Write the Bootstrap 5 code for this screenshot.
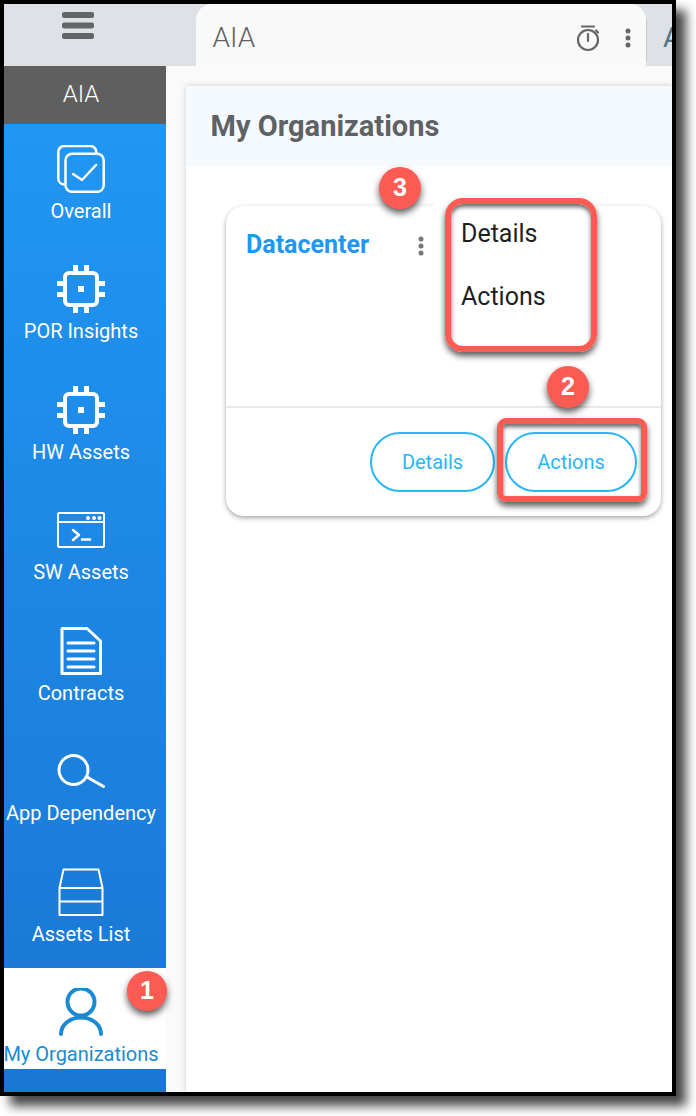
<!DOCTYPE html>
<html lang="en">
<head>
    <meta charset="UTF-8">
    <meta name="viewport" content="width=device-width, initial-scale=1.0">
    <title>My Organizations</title>
    <link href="https://cdn.jsdelivr.net/npm/bootstrap@5.3.0/dist/css/bootstrap.min.css" rel="stylesheet">
    <style>
        body {
            background-color: #fff;
            font-family: Roboto, "Liberation Sans", sans-serif;
            min-height: 1116px;
        }

        .shot-frame {
            width: 676px;
            height: 1096px;
            border: 4px solid #000;
            box-shadow: 10px 10px 10px rgba(0, 0, 0, 0.72);
            overflow: hidden;
            background-color: #fff;
        }

        /* top strip */
        .top-strip {
            height: 62px;
            background-color: #dee2e6;
        }

        .burger-cell {
            width: 192px;
            padding: 8px 0 0 58px;
        }

        .tab-active {
            width: 450px;
            background-color: #f9f9f9;
            border-radius: 16px 16px 0 0;
            padding: 6px 15px 0 16.500px;
            height: 62px;
            color: #5f6265;
            font-size: 28px;
            font-weight: 300;
        }

        .tab-next {
            width: 26px;
            overflow: hidden;
            color: #4f7286;
            font-size: 28px;
            line-height: 34px;
            padding: 17px 0 0 17px;
            position: relative;
        }

        .tab-next::before {
            content: "";
            position: absolute;
            left: 0;
            top: 16px;
            bottom: 4px;
            width: 1px;
            background-color: #c5cacd;
        }

        .tab-tools {
            gap: 25px;
        }

        /* sidebar */
        .side-col {
            width: 162px;
            flex: none;
            height: 1026px;
        }

        .side-brand {
            height: 58px;
            background-color: #5f5f5f;
            color: #fff;
            font-size: 24px;
            font-weight: 300;
            padding: 0 8px 2px 0;
        }

        .side-menu {
            height: 968px;
            background: linear-gradient(180deg, #2196f3, #1976d2);
            padding-top: 0.5px;
        }

        .side-item {
            height: 100.5px;
            margin-bottom: 20px;
            padding: 20px 8px 0 0;
            color: #fff;
            font-size: 20px;
            line-height: 27px;
            white-space: nowrap;
        }

        .side-item svg {
            display: block;
            margin-bottom: 5px;
        }

        .side-item.is-on {
            background-color: #fff;
            color: #1a8ad4;
            margin-bottom: 0;
        }

        /* main area */
        .main-col {
            background-color: #fafafa;
            padding: 20px 0 0 20px;
            min-width: 0;
        }

        .org-panel {
            background-color: #fff;
            height: 1006px;
            box-shadow: 0 0 6px rgba(0, 0, 0, 0.18);
        }

        .org-head {
            height: 80px;
            background-color: #f5faff;
            color: #5f6265;
            font-size: 29px;
            font-weight: 700;
            padding: 2px 0 0 24.500px;
        }

        .org-body {
            padding: 40px 11px 0 40px;
        }

        .org-card {
            height: 310px;
            border: 0;
            border-radius: 18px;
            box-shadow: 0 2px 5px rgba(0, 0, 0, 0.35);
        }

        .org-card .card-body {
            padding: 24px 20px 0;
            height: 200px;
            flex: none;
        }

        .org-name {
            color: #2196f3;
            font-size: 25px;
            font-weight: 700;
            line-height: 30px;
        }

        .card-kebab {
            margin: 6px 0 0 49px;
        }

        .org-card .card-footer {
            background-color: transparent;
            border-top: 2px solid #e9e9e9;
            padding: 24px 24px 0 0;
            gap: 10px;
        }

        .btn-pill {
            height: 60px;
            border: 2px solid #29b6f6;
            border-radius: 30px;
            color: #29b6f6;
            background-color: #fff;
            font-size: 20px;
            line-height: 54px;
            padding: 0;
        }

        .btn-details { width: 125px; }
        .btn-actions { width: 132px; }

        /* annotations */
        .org-menu {
            position: absolute;
            left: 208px;
            top: -3px;
            width: 164px;
            height: 150px;
            background-color: #fff;
        }

        .call-box {
            position: absolute;
            border: 6px solid #fc5b53;
            box-shadow: 0 4px 6px rgba(0, 0, 0, 0.65), inset 0 3px 4px rgba(0, 0, 0, 0.6);
        }

        .call-menu {
            left: 219px;
            top: -8px;
            width: 152px;
            height: 154px;
            border-radius: 18px;
            padding: 12px 10px;
            color: #1f1f1f;
            font-size: 25px;
            line-height: 36px;
        }

        .call-menu div + div {
            margin-top: 27px;
        }

        .call-btn {
            left: 271px;
            top: 212px;
            width: 150px;
            height: 84px;
            border-radius: 9px;
        }

        .call-dot {
            position: absolute;
            width: 42px;
            height: 42px;
            background-color: #fc5b53;
            color: #fff;
            font-family: "Liberation Sans", sans-serif;
            font-size: 25px;
            font-weight: 700;
            box-shadow: 0 4px 7px rgba(0, 0, 0, 0.65);
        }

        .dot-one { left: 123px; top: 967px; width: 40px; height: 40px; }
        .dot-two { left: 321px; top: 160px; }
        .dot-three { left: 153px; top: -39px; }
    </style>
</head>
<body>
    <div class="shot-frame position-relative">
        <div class="top-strip d-flex">
            <div class="burger-cell">
                <svg width="32" height="27" viewBox="0 0 32 27"><g fill="#636668"><rect width="32" height="6" rx="2"/><rect y="10.500" width="32" height="6" rx="2"/><rect y="21" width="32" height="6" rx="2"/></g></svg>
            </div>
            <div class="tab-active d-flex align-items-center justify-content-between">
                <span>AIA</span>
                <span class="tab-tools d-flex align-items-center">
                    <svg width="24" height="28" viewBox="0 0 24 28" fill="none" stroke="#666" stroke-width="2.200"><circle cx="12" cy="16" r="10"/><path d="M6 2.500h12M12 10v7M20 6.500l2 2" stroke-linecap="round"/></svg>
                    <svg width="6" height="20" viewBox="0 0 6 20" fill="#666"><circle cx="3" cy="3" r="2.500"/><circle cx="3" cy="10" r="2.500"/><circle cx="3" cy="17" r="2.500"/></svg>
                </span>
            </div>
            <div class="tab-next">A</div>
        </div>

        <div class="d-flex">
            <div class="side-col">
                <div class="side-brand d-flex align-items-center justify-content-center">AIA</div>
                <div class="side-menu">
                    <div class="side-item d-flex flex-column align-items-center">
                        <svg width="48" height="48" viewBox="0 0 48 48" fill="none" stroke="#fff" stroke-width="2.500" stroke-linecap="round" stroke-linejoin="round"><path d="M7.500 39.500H7a6 6 0 0 1-5.700-6V7a6 6 0 0 1 6-6h26a6 6 0 0 1 6 6v1"/><rect x="8.500" y="8.800" width="38.200" height="38" rx="6.500"/><path d="M16 29l9 6 14-15"/></svg>
                        <span>Overall</span>
                    </div>
                    <div class="side-item d-flex flex-column align-items-center">
                        <svg width="48" height="48" viewBox="0 0 48 48"><rect x="8" y="8" width="32" height="32" rx="4" fill="none" stroke="#fff" stroke-width="4"/><rect x="21" y="21" width="6" height="6" fill="#fff"/><path d="M16 0h5v6h-5zM27 0h5v6h-5zM16 42h5v6h-5zM27 42h5v6h-5zM0 16h6v5H0zM0 27h6v5H0zM42 16h6v5h-6zM42 27h6v5h-6z" fill="#fff"/></svg>
                        <span>POR Insights</span>
                    </div>
                    <div class="side-item d-flex flex-column align-items-center">
                        <svg width="48" height="48" viewBox="0 0 48 48"><rect x="8" y="8" width="32" height="32" rx="4" fill="none" stroke="#fff" stroke-width="4"/><rect x="21" y="21" width="6" height="6" fill="#fff"/><path d="M16 0h5v6h-5zM27 0h5v6h-5zM16 42h5v6h-5zM27 42h5v6h-5zM0 16h6v5H0zM0 27h6v5H0zM42 16h6v5h-6zM42 27h6v5h-6z" fill="#fff"/></svg>
                        <span>HW Assets</span>
                    </div>
                    <div class="side-item d-flex flex-column align-items-center">
                        <svg width="48" height="48" viewBox="0 0 48 48" fill="none" stroke="#fff" stroke-width="2"><rect x="1" y="7" width="46" height="34" rx="1"/><path d="M1 16h46"/><path d="M16 24l6 5-6 5" stroke-width="2.500" stroke-linecap="round" stroke-linejoin="round"/><path d="M25 33.500h8" stroke-width="2.500" stroke-linecap="round"/><g fill="#fff" stroke="none"><circle cx="31" cy="12" r="2"/><circle cx="37" cy="12" r="2"/><circle cx="42.500" cy="12" r="2"/></g></svg>
                        <span>SW Assets</span>
                    </div>
                    <div class="side-item d-flex flex-column align-items-center">
                        <svg width="48" height="48" viewBox="0 0 48 48" fill="none" stroke="#fff" stroke-width="3" stroke-linecap="round" stroke-linejoin="round"><path d="M5 1.500h25L43.500 14v32.500H5z"/><path d="M11 16h26M11 24h26M11 32h26M11 40h26"/></svg>
                        <span>Contracts</span>
                    </div>
                    <div class="side-item d-flex flex-column align-items-center">
                        <svg width="48" height="48" viewBox="0 0 48 48" fill="none" stroke="#fff" stroke-width="3" stroke-linecap="round"><circle cx="16.500" cy="23" r="14.500"/><path d="M30 30l16.500 9.500"/></svg>
                        <span>App Dependency</span>
                    </div>
                    <div class="side-item d-flex flex-column align-items-center">
                        <svg width="48" height="48" viewBox="0 0 48 48" fill="none" stroke="#fff" stroke-width="2" stroke-linejoin="round"><path d="M6.500 1.500h35L45.500 20h-43zM2.500 20h43v27h-43zM2.500 33.500h43"/></svg>
                        <span>Assets List</span>
                    </div>
                    <div class="side-item is-on d-flex flex-column align-items-center">
                        <svg width="48" height="48" viewBox="0 0 48 48" fill="none" stroke="#1a8ad4" stroke-width="4" stroke-linecap="round"><circle cx="24" cy="14" r="13.500"/><path d="M4 46c0-9.500 9-16.500 20-16.500S44 36.500 44 46"/></svg>
                        <span>My Organizations</span>
                    </div>
                </div>
            </div>

            <div class="main-col flex-grow-1">
                <div class="org-panel">
                    <div class="org-head d-flex align-items-center">My Organizations</div>
                    <div class="org-body">
                        <div class="card org-card position-relative">
                            <div class="card-body d-flex align-items-start">
                                <span class="org-name">Datacenter</span>
                                <svg class="card-kebab" width="6" height="20" viewBox="0 0 6 20" fill="#777"><circle cx="3" cy="3" r="2.500"/><circle cx="3" cy="10" r="2.500"/><circle cx="3" cy="17" r="2.500"/></svg>
                            </div>
                            <div class="card-footer d-flex justify-content-end">
                                <button type="button" class="btn btn-pill btn-details">Details</button>
                                <button type="button" class="btn btn-pill btn-actions">Actions</button>
                            </div>

                            <div class="org-menu"></div>
                            <div class="call-box call-menu">
                                <div>Details</div>
                                <div>Actions</div>
                            </div>
                            <div class="call-box call-btn"></div>
                            <div class="call-dot dot-two rounded-circle d-flex align-items-center justify-content-center">2</div>
                            <div class="call-dot dot-three rounded-circle d-flex align-items-center justify-content-center">3</div>
                        </div>
                    </div>
                </div>
            </div>
        </div>

        <div class="call-dot dot-one rounded-circle d-flex align-items-center justify-content-center">1</div>
    </div>

    <script src="https://cdn.jsdelivr.net/npm/bootstrap@5.3.0/dist/js/bootstrap.bundle.min.js"></script>
</body>
</html>
